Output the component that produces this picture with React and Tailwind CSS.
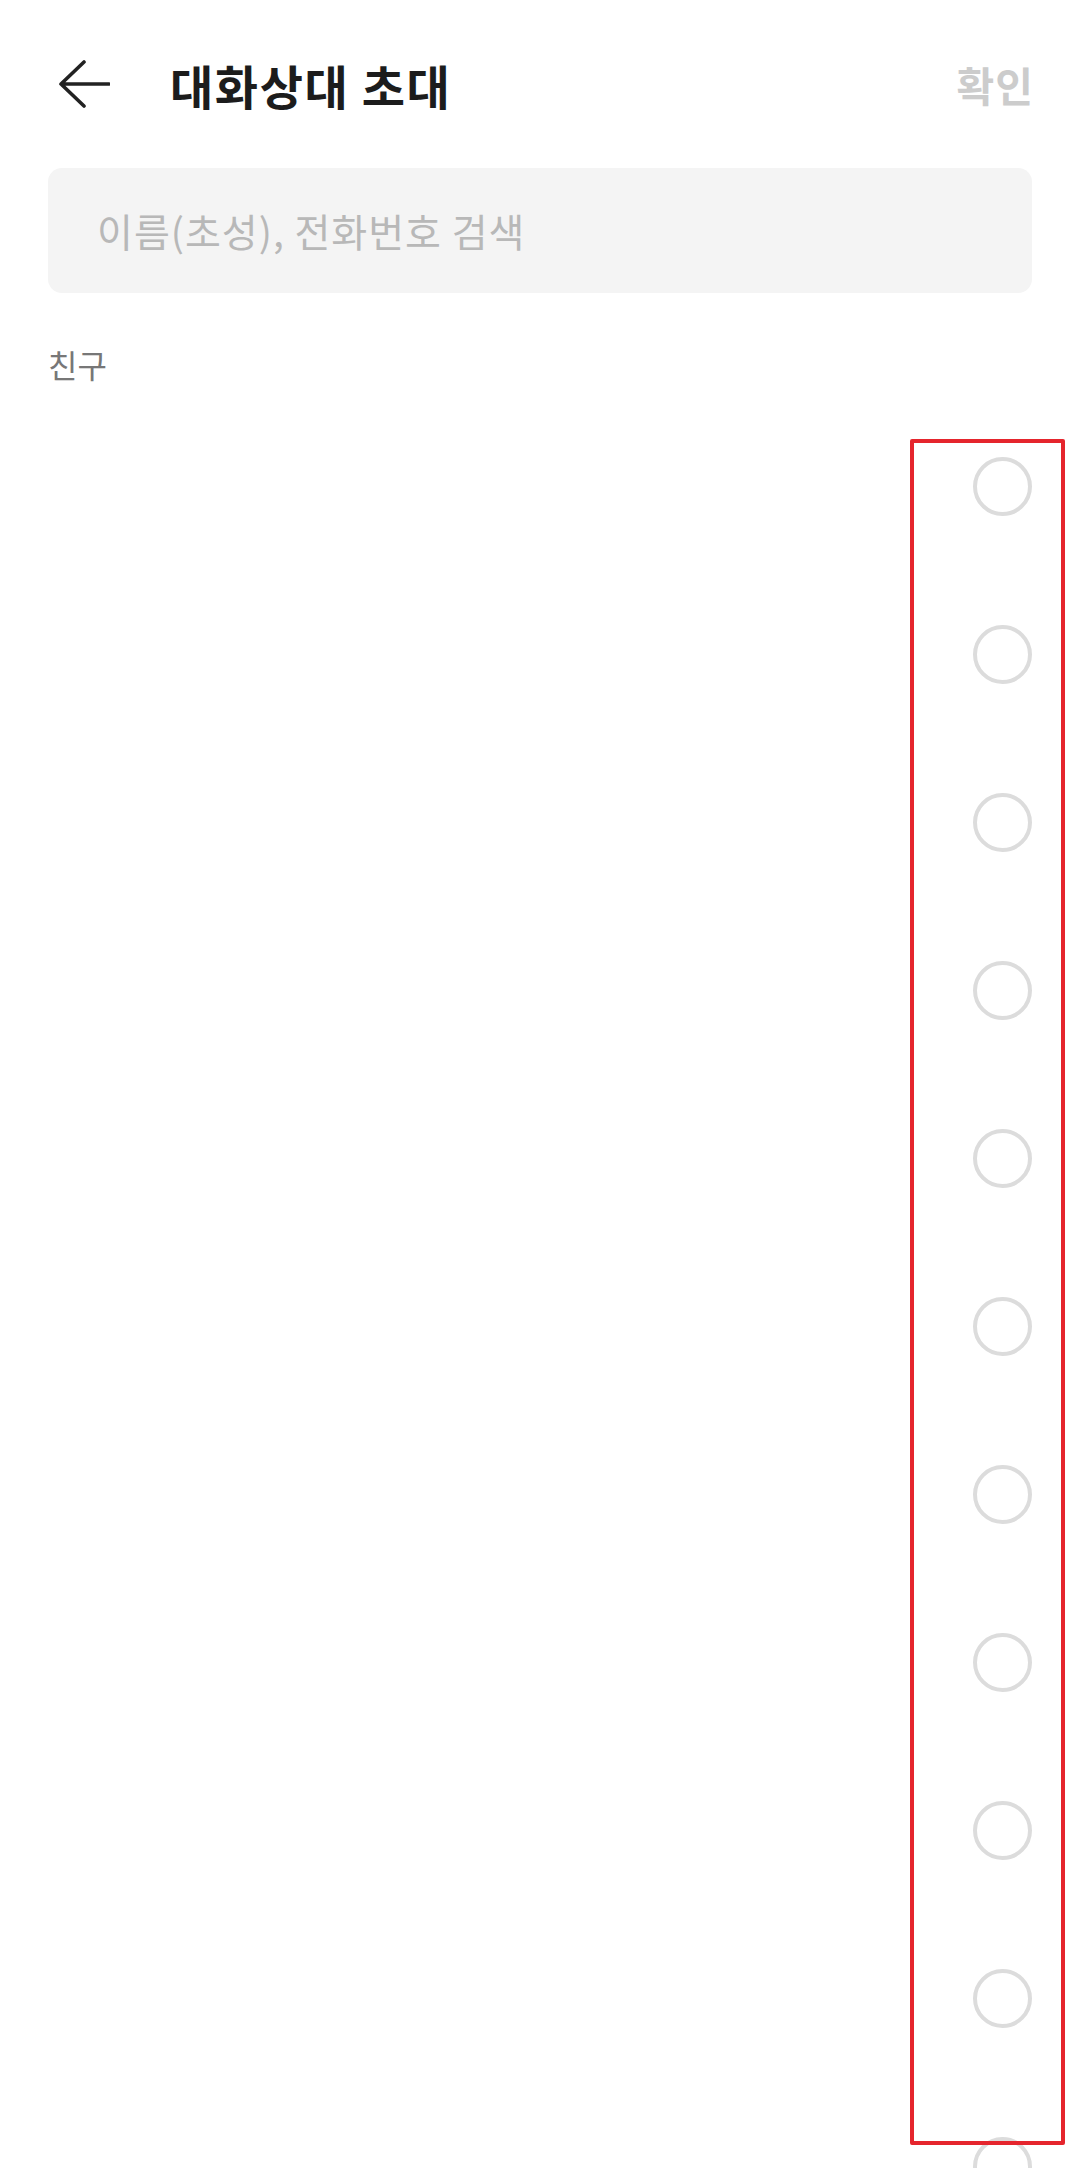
import React from "react";

const font = { fontFamily: '"Noto Sans CJK KR", "Noto Sans", sans-serif' };

function Circle() {
  return (
    <div className="w-[59px] h-[59px] rounded-full border-[4px] border-[#dcdcdc]" />
  );
}

export default function App() {
  const rows = Array.from({ length: 11 });
  return (
    <div className="relative w-[1080px] h-[2168px] overflow-hidden bg-white" style={font}>
      <div className="h-[168px] flex items-center pl-[58px] pr-[46px]">
        <svg width="52" height="50" viewBox="0 0 52 50" fill="none" className="shrink-0">
          <path d="M3 25 H51 M26 3 L3 25 L26 47" stroke="#222222" strokeWidth="3.6" strokeLinecap="round" strokeLinejoin="round" />
        </svg>
        <div className="ml-[60px] text-[47px] font-bold text-[#1c1c1c] leading-none tracking-[1.6px]">대화상대 초대</div>
        <div className="ml-auto text-[41px] font-bold text-[#cccccc] leading-none tracking-[1px]">확인</div>
      </div>
      <div className="px-[48px]">
        <div className="h-[125px] rounded-[14px] bg-[#f4f4f4] flex items-center pl-[49px] text-[39px] text-[#b8b8b8] tracking-[1px]">
          이름(초성), 전화번호 검색
        </div>
        <div className="h-[109px] pt-[52px] text-[32px] leading-[38px] text-[#777777]">친구</div>
        <div className="flex flex-col">
          {rows.map((_, i) => (
            <div key={i} className="h-[168px] flex items-center justify-end">
              <Circle />
            </div>
          ))}
        </div>
      </div>
      <div className="absolute left-[910px] top-[439px] w-[155px] h-[1706px] border-[4px] border-[#e5252d] rounded-[2px] pointer-events-none" />
    </div>
  );
}
